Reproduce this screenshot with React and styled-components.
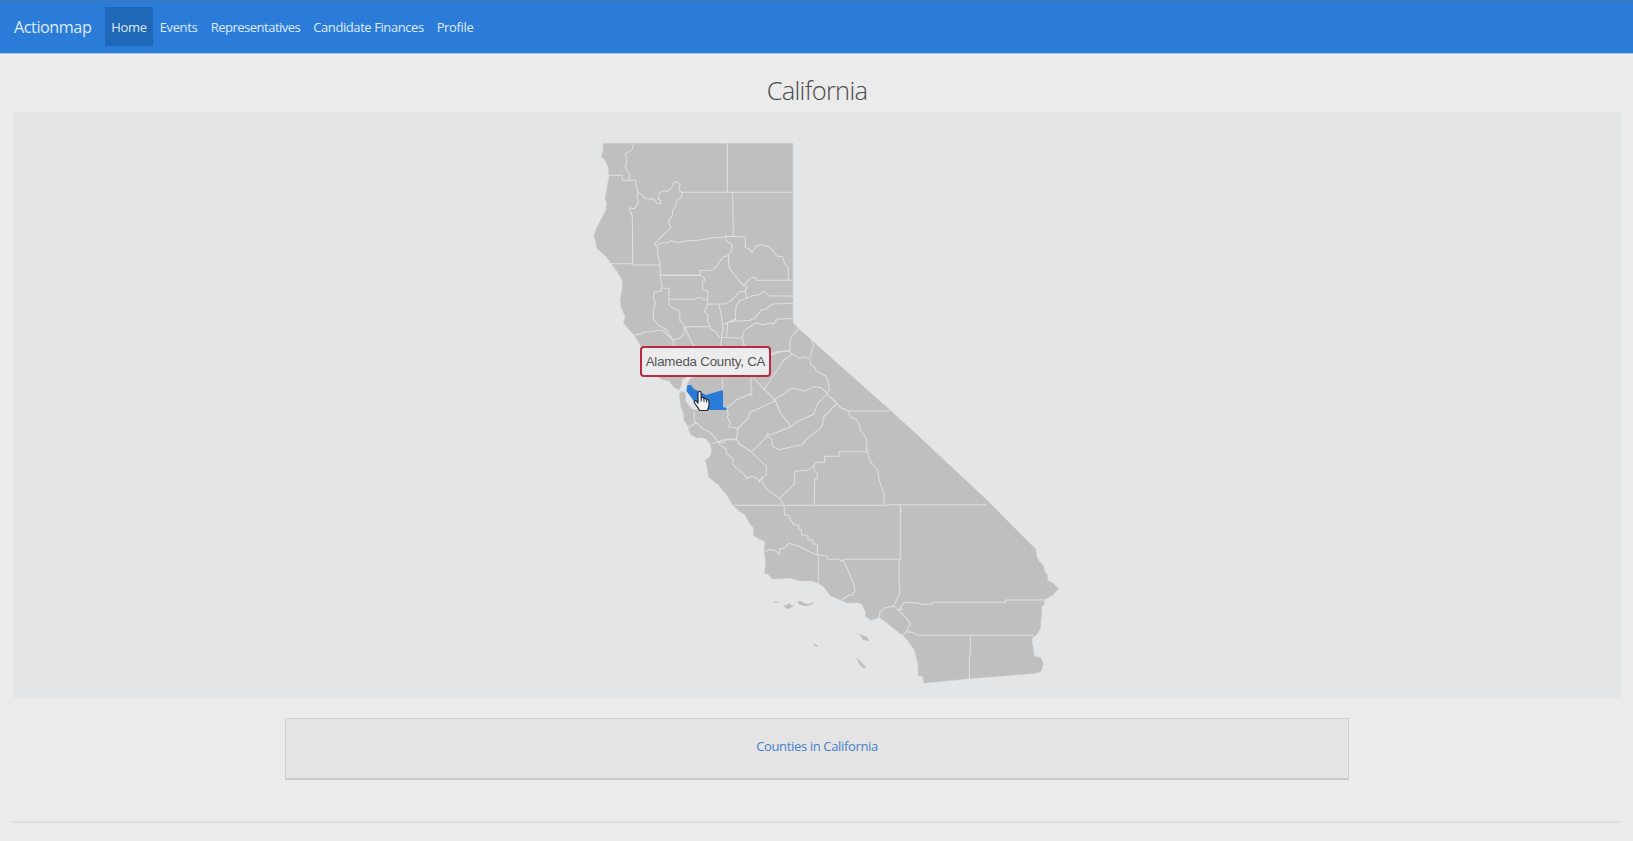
import React from "react";
import styled, { createGlobalStyle } from "styled-components";

const GlobalStyle = createGlobalStyle`
  * { box-sizing: border-box; }
  html, body { margin: 0; padding: 0; background: #ebebeb; overflow: hidden; }
  body { font-family: "Open Sans", "Noto Sans", sans-serif; color: #4a4a4a; }
`;

const Page = styled.div`
  display: flex;
  flex-direction: column;
  height: 841px;
`;

const Navbar = styled.nav`
  display: flex;
  align-items: flex-start;
  height: 54px;
  padding: 6px 0 0 14px;
  background: #2b7cd9;
  border-top: 1px solid #3f79b6;
  border-bottom: 1px solid #a9c6e6;
`;

const Brand = styled.a`
  width: 91px;
  color: #dfeaf7;
  font-size: 16.2px;
  line-height: 40px;
  letter-spacing: -0.45px;
  white-space: nowrap;
`;

const NavLink = styled.a`
  width: ${(p) => p.$width}px;
  height: 39px;
  line-height: 40px;
  text-align: center;
  color: #dfeaf7;
  font-size: 13px;
  letter-spacing: ${(p) => p.$tracking || -0.35}px;
  white-space: nowrap;
  background: ${(p) => (p.$active ? "#1f67b8" : "transparent")};
`;

const Main = styled.main`
  display: flex;
  flex-direction: column;
  padding: 20px 12px 0 13px;
`;

const Title = styled.h1`
  margin: 0;
  height: 38px;
  line-height: 33px;
  font-size: 25.5px;
  font-weight: 300;
  letter-spacing: -0.7px;
  text-align: center;
`;

const MapPanel = styled.section`
  position: relative;
  height: 586px;
  background: #e4e5e7;
`;

const MapDrawing = styled.svg`
  display: block;
  width: 1608px;
  height: 586px;
`;

const Tooltip = styled.div`
  position: absolute;
  left: 627px;
  top: 234px;
  width: 131px;
  height: 31px;
  border: 2px solid #b92a42;
  border-radius: 4px;
  background: #ececec;
  color: #555;
  font: 13.3px/27px "Liberation Sans", Arial, sans-serif;
  letter-spacing: -0.2px;
  text-align: center;
  white-space: nowrap;
`;

const Cursor = styled.svg`
  position: absolute;
  left: 680px;
  top: 278px;
  width: 17px;
  height: 22px;
`;

const Card = styled.section`
  display: flex;
  justify-content: center;
  width: 1064px;
  height: 62px;
  margin: 20px 0 0 272px;
  padding-top: 18px;
  background: #e4e4e4;
  border: 1px solid #d0d0d0;
  border-bottom: 2px solid #c9c9c9;
`;

const CardLink = styled.a`
  color: #4580cb;
  font-size: 13px;
  line-height: 18px;
  letter-spacing: -0.35px;
`;

const Divider = styled.hr`
  width: 100%;
  height: 2px;
  margin: 41px 0 0;
  border: 0;
  background: #dfdfdf;
`;

const LINKS = [
  { label: "Home", width: 48, active: true },
  { label: "Events", width: 51 },
  { label: "Representatives", width: 103, tracking: -0.5 },
  { label: "Candidate Finances", width: 123, tracking: -0.42 },
  { label: "Profile", width: 50 },
];

const MAINLAND =
  "M603 143.3H793V322.7L798 328L890 410L910 428L987 500L1036 549.3L1036.7 556L1039 561L1043.3 565L1045 572L1048 576L1047.3 580L1053 583L1058.7 588.7L1053 595L1045.3 599.3L1044 605L1041.7 606.7L1042 613L1041 620L1040.7 628.3L1036 635.7L1032.7 637.3L1032 643L1033.3 646.7L1034 656L1041.3 657.7L1043.3 664L1041.7 671L1037 673L1032.7 673.7L970 678.7L923.7 683.3L922.7 676.7L918.3 675.7L917.7 663.3L914.3 650L906.7 639.3L902.3 635.3L893.3 628.3L885 621.7L879 617.3L875 619.3L870.7 620.3L865 616L865.7 613.3L862.3 605L858.3 602.7L846.7 603L840.7 600.3L830 595.7L825 588.3L818.3 583.3L811.7 581L800 581L790 578.3L772.3 579.3L768.3 574.7L764.3 573.3L765.7 563.3L764 550L765 541.7L756.7 537.7L753.3 535L753.7 528.3L750 524.3L745 515L740 511.7L733.3 506L726.7 495L718.3 485L708.3 476.7L706.7 465L705 460L710 456.7L711.7 450L710 444L706 438.8L701 437.5L696.7 438.3L690 434L687.7 426L684 421L683.3 413.3L680.5 406L680 400L679.3 394L681.5 391L684.5 392L686 396L685.5 401L688.5 405L692 409L697 410L698 402L690 396L687 391L686.5 385L690 379L693 377H687L682 380L681.5 386L679 390L675 388L673.3 386.7L669 381L663 380L658.3 377.3L640 345L634 335L625 325L623.3 323.3L625 316.7L621 307L620 300L622.3 286.7L622 280L619.3 275L611 263.3L606.7 257.3L596.7 248.3L595.7 241.7L593.7 236L597 227L606 210L606.5 203L605 198.3L609 175.7L608 167L605 160L601 156.7L603 150Z";

// County borders, grouped by part of the state; each group has a local grid of thirds.
const BORDERS = [
  {
    x: 580,
    y: 130,
    d: [
      "M160 42L157 57L151 63L136 71L140 95L136 108L141 122L149 130L146 151",
      "M87 136H127V151H166L174 188L186 193L196 206L222 208L230 220L243 221L241 210L234 207L238 190L247 183L263 184L279 168L281 160L291 155L300 163L297 180L308 190L302 204L293 208L286 230L278 240L277 256L266 273L273 292L262 303L222 343",
      "M442 40V187M303 187H639M458 187L460 320",
      "M174 188L170 197L176 214L170 226L163 236L149 233L149 240L157 258L158 403M91 401H158V405H240",
      "M222 343L229 347L240 340L262 338L274 332L297 338L313 333L360 330L405 322L420 324L437 319L496 321L496 352L506 356L516 367L527 350L540 344L566 350L578 360L590 378L607 380L614 400L625 412L625 450",
      "M222 343L234 353L232 370L239 395L241 436H360M437 320L441 334L455 343L456 360L447 372L445 392L449 415L476 450M447 376L428 382L413 404L399 420L360 422L360 436",
    ],
  },
  {
    x: 580,
    y: 250,
    d: [
      "M241 76L246 114L267 115L267 148H347L350 143H366L368 148H382M241 115L245 124L223 126L220 143L227 160L221 176L220 207L233 224L260 240L279 270L302 264L315 245L312 225L299 211L300 183L282 176L267 164L266 148",
      "M241 76H360M360 76L371 82L375 90L367 98L369 119L384 124L382 155L386 163M476 90L490 107L502 110L495 122L478 126L453 152L440 161L384 163L375 179L376 190L384 195L383 212L392 237L405 243L419 262",
      "M490 107L505 92L511 84L524 82L531 91H639M625 89L621 92",
      "M502 110L496 123L500 145L519 137L537 134L553 124L567 138H639M500 145L477 154L468 168L466 207L428 225L423 190L417 164M466 207L470 214L510 211L524 205L543 181L559 177L578 162L639 160M466 207L464 215L443 217L440 262",
      "M315 230H388M163 254L185 252L187 246L216 245L241 240L250 243L266 258L279 271L282 290M315 230L323 250L330 269L344 290M425 229L430 234L424 262L487 265L490 246L499 237L527 219L550 224L573 218L580 224L591 208L639 205",
      "M487 265L492 286L501 290M657 233L631 266L629 305M572 311L595 304L628 303M425 262L422 290",
    ],
  },
  {
    x: 690,
    y: 310,
    d: [
      "M365 92L371 108L363 125L364 140M299 120L300 128L330 146L340 140L359 144L361 161L375 174L379 184L407 198L416 217L418 241L411 249L393 233L371 230L346 243L303 235L282 253L262 262L256 271L189 203M221 240L282 150L306 134M242 136L270 126L299 121",
      "M183 200V253M110 295L140 269L181 252L188 258M256 271L226 287L181 306L174 325L144 355L140 388L108 387L103 398L87 398M256 271L271 309L303 350L325 333L371 313L383 280L411 252L440 279M303 350L242 374L230 371L232 378L186 425",
      "M440 279L452 293L475 303H600M475 303L481 322L500 329L509 346L512 363L525 378L531 399L530 424M110 295L115 312L112 320L121 338L116 350L135 353L144 360M232 378L244 386L249 410L268 419L313 408L336 405L348 388L371 370L396 350L402 320L440 281",
      "M98 204V240M14 306L12 330L18 337L38 356L61 368L87 398L97 390M-7 352L5 348L18 337",
    ],
  },
  {
    x: 690,
    y: 430,
    d: [
      "M84 35L102 29H142L145 39L184 66L229 109V136L214 144L208 157L204 146L193 142L185 139L170 146L165 137L131 106L128 85L110 72L108 57L91 46L84 35L65 41",
      "M215 140L217 159L234 181L269 205L283 227V254L297 257L302 271L314 286H326V299H334V315H354V330H369V342H382V374L410 378L414 388H450L454 394L461 388H631V226",
      "M130 226H595V224H890M269 205L314 162V124L352 121L369 110L379 97H404V79H447V65H532L530 55M371 105L373 122L382 128V145L374 148L373 226M532 65L541 94L563 120L568 153L581 188L583 210L580 226M630 237L634 243L630 248",
      "M223 365L235 359L254 360L268 373L270 357L284 354L296 340L325 348L360 366L382 374M385 374V450M461 392L486 450M627 388V450",
    ],
  },
  {
    x: 750,
    y: 500,
    d: [
      "M205 240V250M306 240L313 257L315 271L308 285H297L273 301M447 240L450 270L445 291L430 318L406 323L390 337L387 352M430 318L446 332L462 307L507 309L513 313H547V307H767V300H886",
      "M446 332L470 355L481 370L469 397L457 406M470 395L487 397L504 406H850M661 407V463L658 467V536M446 332L458 326",
    ],
  },
];

const ISLANDS = [
  "M773 602L776 601.3L779 602.6L776 603Z",
  "M783 605L787 605L789 603L791 605L794 606L790 608L787 609.5L785 607Z",
  "M797.5 601L802 601.5L805 603.5L810 604L813 602L813 604L809 605.5L805 606L799 604.5Z",
  "M812.5 643.5L815 643.8L818.5 646L816 646.5Z",
  "M857 633L863 635.5L867 637L869.5 641L863 640L861 636Z",
  "M856.5 657L860 661L865 666L866 668.5L863 668L859 664Z",
];

const ALAMEDA =
  "M687 386L689 385L691 385L694 389L700 392L706 395L723 390V407L726.5 408V410L702 410L695 403L691 397L686.5 391Z";

function CaliforniaMap() {
  return (
    <MapDrawing viewBox="13 112 1608 586">
      <path d={MAINLAND} fill="#bfbfbf" stroke="#d3d3d4" strokeWidth="0.5" strokeLinejoin="round" />
      {ISLANDS.map((d) => (
        <path key={d} d={d} fill="#bfbfbf" />
      ))}
      {BORDERS.map((g) => (
        <g key={`${g.x}-${g.y}`} transform={`translate(${g.x} ${g.y}) scale(0.33333)`}>
          <path d={g.d.join("")} fill="none" stroke="#dfdfe0" strokeWidth="3.1" strokeLinejoin="round" />
        </g>
      ))}
      <path d={ALAMEDA} fill="#2b7cd9" />
    </MapDrawing>
  );
}

function HandCursor() {
  return (
    <Cursor viewBox="0 0 17 22">
      <path
        d="M5 13V3.3C5 .7 8.2 .7 8.2 3.3V8C8.6 7 11 7.2 11 8.8C11.5 8 13.5 8.2 13.6 9.8C14.2 9.3 16 9.6 16 11.5V15C16 17 15 18 14.5 20.5H6.5C6 18 3 15.5 1.5 13C.5 11 2.5 10 3.6 11.4Z"
        fill="#f2f2f2"
        stroke="#222a35"
        strokeWidth="1.2"
        strokeLinejoin="round"
      />
      <path d="M8.2 8V11.5M11 9V12M13.6 10V12.5" stroke="#222a35" strokeWidth="1" />
    </Cursor>
  );
}

export default function App() {
  return (
    <Page>
      <GlobalStyle />
      <Navbar>
        <Brand>Actionmap</Brand>
        {LINKS.map((l) => (
          <NavLink key={l.label} $width={l.width} $active={l.active} $tracking={l.tracking}>
            {l.label}
          </NavLink>
        ))}
      </Navbar>
      <Main>
        <Title>California</Title>
        <MapPanel>
          <CaliforniaMap />
          <Tooltip>Alameda County, CA</Tooltip>
          <HandCursor />
        </MapPanel>
        <Card>
          <CardLink>Counties in California</CardLink>
        </Card>
        <Divider />
      </Main>
    </Page>
  );
}
